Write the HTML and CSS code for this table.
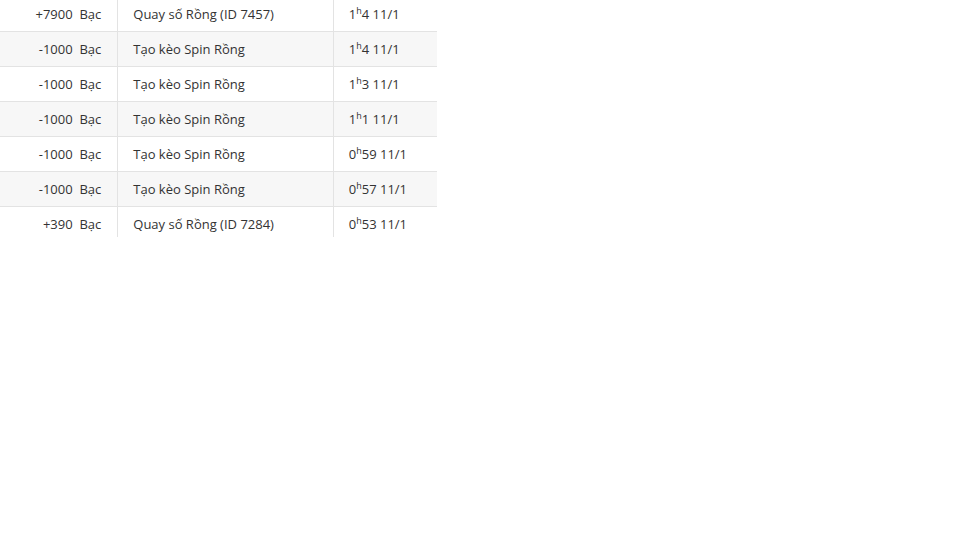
FILE: index.html
```html
<!DOCTYPE html>
<html lang="vi">
<head>
<meta charset="utf-8">
<link rel="stylesheet" href="styles.css">
</head>
<body>
<div class="scroll">
<table class="history">
<tbody>
<tr><td class="amt">+7900&nbsp; Bạc</td><td class="desc">Quay số Rồng (ID 7457)</td><td class="time">1<sup>h</sup>4 11/1</td></tr>
<tr><td class="amt">-1000&nbsp; Bạc</td><td class="desc">Tạo kèo Spin Rồng</td><td class="time">1<sup>h</sup>4 11/1</td></tr>
<tr><td class="amt">-1000&nbsp; Bạc</td><td class="desc">Tạo kèo Spin Rồng</td><td class="time">1<sup>h</sup>3 11/1</td></tr>
<tr><td class="amt">-1000&nbsp; Bạc</td><td class="desc">Tạo kèo Spin Rồng</td><td class="time">1<sup>h</sup>1 11/1</td></tr>
<tr><td class="amt">-1000&nbsp; Bạc</td><td class="desc">Tạo kèo Spin Rồng</td><td class="time">0<sup>h</sup>59 11/1</td></tr>
<tr><td class="amt">-1000&nbsp; Bạc</td><td class="desc">Tạo kèo Spin Rồng</td><td class="time">0<sup>h</sup>57 11/1</td></tr>
<tr><td class="amt">+390&nbsp; Bạc</td><td class="desc">Quay số Rồng (ID 7284)</td><td class="time">0<sup>h</sup>53 11/1</td></tr>
</tbody>
</table>
</div>
</body>
</html>
```
FILE: styles.css
```css
html, body {
  margin: 0;
  padding: 0;
  background: #fff;
}
body {
  font-family: "Open Sans", "Liberation Sans", sans-serif;
  font-size: 13px;
  color: #333;
}
.scroll {
  width: 437px;
  height: 237px;
  overflow: hidden;
}
.history {
  width: 437px;
  margin-top: -4px;
  border-collapse: collapse;
}
.history tr {
  height: 35px;
}
.history tr:nth-child(even) td {
  background: #f7f7f7;
}
.history td {
  padding: 0 15px;
  border-top: 1px solid #e3e3e3;
  vertical-align: middle;
  white-space: nowrap;
  line-height: 18px;
}
.history tr:first-child td {
  border-top: 0;
  padding-top: 1px;
}
.history td + td {
  border-left: 1px solid #e3e3e3;
}
.amt {
  width: 86px;
  padding-right: 16px !important;
  text-align: right;
}
.desc {
  width: 184px;
}
.time {
  width: 73px;
}
.time sup {
  font-size: 9px;
  line-height: 0;
  vertical-align: 5px;
}
```
